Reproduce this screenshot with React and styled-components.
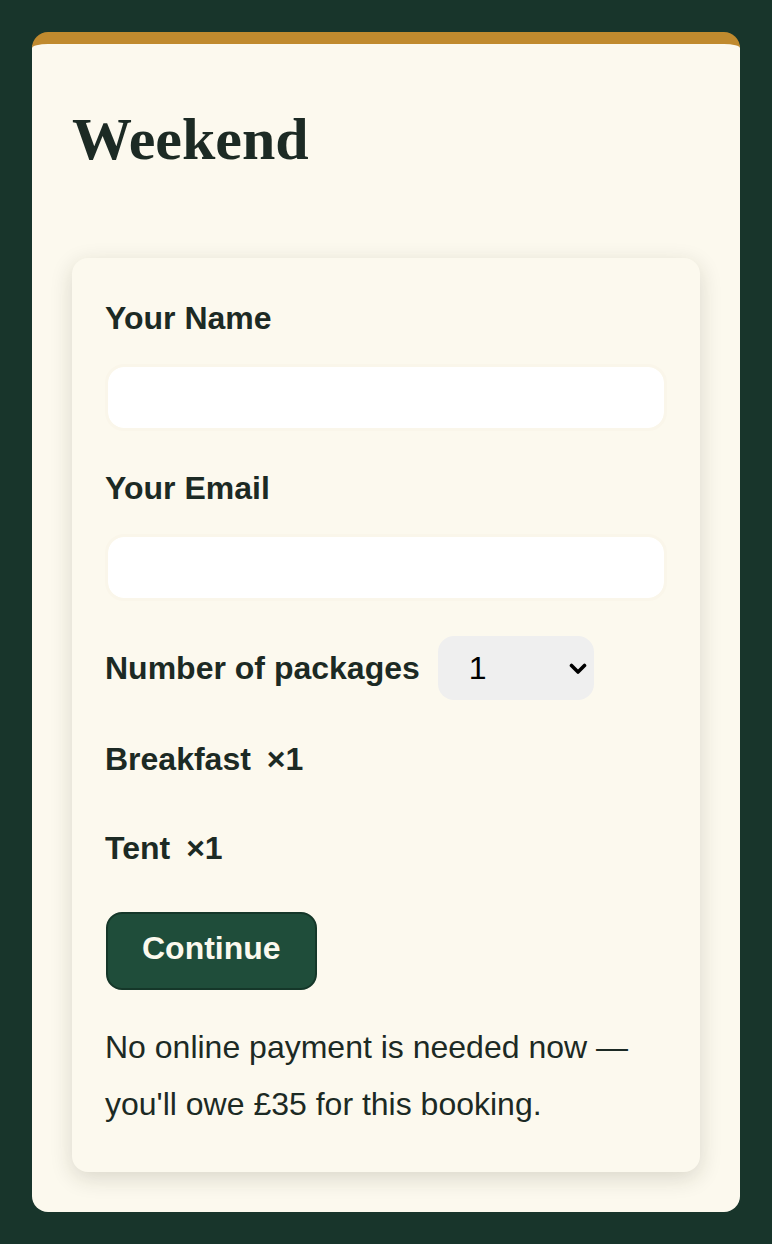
import React from "react";
import styled, { createGlobalStyle } from "styled-components";

const GlobalStyle = createGlobalStyle`
  html, body {
    margin: 0;
    padding: 0;
    background: #18352b;
  }
  body {
    font-family: "Liberation Sans", Arial, sans-serif;
    color: #1c2a24;
  }
  * { box-sizing: border-box; }
`;

const Page = styled.div`
  padding: 32px;
  min-height: 1244px;
`;

const Card = styled.main`
  background: #fcf9ee;
  border-top: 12px solid #c08a2e;
  border-radius: 16px;
  padding: 0 40px 40px;
`;

const Title = styled.h1`
  margin: 0;
  padding: 61px 0 84px;
  font-family: "Liberation Serif", "Times New Roman", serif;
  font-weight: 700;
  font-size: 60px;
  line-height: normal;
  color: #1c2a24;
`;

const Panel = styled.form`
  background: #fcf9ee;
  border-radius: 16px;
  box-shadow: 0 6px 22px rgba(40, 35, 20, 0.16);
  padding: 32px 33px 39px;
  display: flex;
  flex-direction: column;
  gap: 29px;
`;

const Field = styled.div`
  display: flex;
  flex-direction: column;
  gap: 18px;
`;

const Label = styled.label`
  font-size: 32px;
  font-weight: 700;
  line-height: 1.75;
  color: #1c2a24;
  white-space: nowrap;
`;

const TextInput = styled.input`
  display: block;
  width: 100%;
  height: 67px;
  border: 3px solid #faf6ea;
  border-radius: 19px;
  background: #ffffff;
  background-clip: padding-box;
  font-family: "Liberation Sans", Arial, sans-serif;
  font-size: 28px;
  padding: 0 16px;
  outline: none;
`;

const Row = styled.div`
  display: flex;
  align-items: center;
  gap: 18px;
  margin-top: 6px;
`;

const SelectWrap = styled.div`
  position: relative;
  width: 156px;
  height: 64px;
`;

const Select = styled.select`
  appearance: none;
  -webkit-appearance: none;
  width: 100%;
  height: 100%;
  border: none;
  border-radius: 16px;
  background-color: #efefef;
  font-family: "Liberation Sans", Arial, sans-serif;
  font-size: 32px;
  color: #000;
  padding: 0 40px 0 31px;
  outline: none;
`;

const Chevron = styled.svg`
  position: absolute;
  right: 7px;
  top: 50%;
  width: 18px;
  height: 12px;
  margin-top: -5px;
  pointer-events: none;
`;

const Item = styled.div`
  display: flex;
  gap: 16px;
  font-size: 32px;
  font-weight: 700;
  line-height: 1.75;
  margin-top: ${(p) => p.$offset}px;
`;

const Button = styled.button`
  align-self: flex-start;
  margin: 7px 0 0 1px;
  height: 78px;
  padding: 0 34px 6px;
  border: 2px solid #153729;
  border-radius: 16px;
  background: #1f4d3a;
  color: #fcf9ee;
  font-family: "Liberation Sans", Arial, sans-serif;
  font-size: 32px;
  font-weight: 700;
  cursor: pointer;
`;

const Note = styled.p`
  margin: 0;
  font-size: 32px;
  line-height: 1.78;
  color: #1c2a24;
`;

export default function App() {
  return (
    <>
      <GlobalStyle />
      <Page>
        <Card>
          <Title>Weekend</Title>
          <Panel onSubmit={(e) => e.preventDefault()}>
            <Field>
              <Label htmlFor="name">Your Name</Label>
              <TextInput id="name" type="text" />
            </Field>
            <Field>
              <Label htmlFor="email">Your Email</Label>
              <TextInput id="email" type="email" />
            </Field>
            <Row>
              <Label htmlFor="packages">Number of packages</Label>
              <SelectWrap>
                <Select id="packages" defaultValue="1">
                  <option value="1">1</option>
                  <option value="2">2</option>
                  <option value="3">3</option>
                </Select>
                <Chevron viewBox="0 0 18 12" aria-hidden="true">
                  <path
                    d="M2.5 2.5 L9 9 L15.5 2.5"
                    fill="none"
                    stroke="#000"
                    strokeWidth="3.6"
                    strokeLinecap="round"
                    strokeLinejoin="round"
                  />
                </Chevron>
              </SelectWrap>
            </Row>
            <Item $offset={2}>
              <span>Breakfast</span>
              <span>×1</span>
            </Item>
            <Item $offset={4}>
              <span>Tent</span>
              <span>×1</span>
            </Item>
            <Button type="submit">Continue</Button>
            <Note>
              No online payment is needed now — you'll owe £35 for this booking.
            </Note>
          </Panel>
        </Card>
      </Page>
    </>
  );
}
